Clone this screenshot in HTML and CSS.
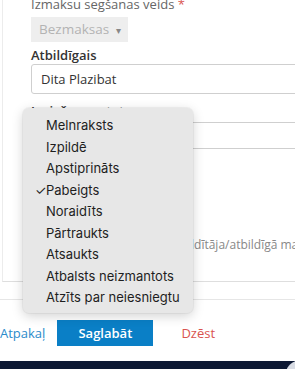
FILE: index.html
```html
<!DOCTYPE html>
<html lang="lv">
<head>
  <meta charset="UTF-8">
  <meta name="viewport" content="width=device-width, initial-scale=1.0">
  <title>Ieviešanas statuss</title>
  <link rel="stylesheet" href="styles.css">
</head>
<body>

<div class="panel">
  <div class="form">
    <label class="field-label muted">Izmaksu segšanas veids <span class="req">*</span></label>
    <div class="select-disabled">Bezmaksas <span class="caret">&#9662;</span></div>

    <label class="field-label">Atbildīgais</label>
    <div class="text-input">Dita Plazibat</div>

    <label class="field-label status-label">Ieviešanas statuss</label>
    <div class="text-input short">Pabeigts</div>

    <div class="note-block">
      <p class="note">Nosūtīt paziņojumus par izpildītāja/atbildīgā maiņu</p>
    </div>
  </div>
</div>

<div class="footer">
  <div class="actions">
    <a class="link-back" href="#">Atpakaļ</a>
    <button class="btn-save">Saglabāt</button>
    <a class="link-delete" href="#">Dzēst</a>
  </div>
</div>

<div class="bottom-strip"></div>

<!-- Status dropdown menu -->
<ul class="menu">
  <li>Melnraksts</li>
  <li>Izpildē</li>
  <li>Apstiprināts</li>
  <li class="checked">Pabeigts</li>
  <li>Noraidīts</li>
  <li>Pārtraukts</li>
  <li>Atsaukts</li>
  <li>Atbalsts neizmantots</li>
  <li>Atzīts par neiesniegtu</li>
</ul>

</body>
</html>
```

FILE: styles.css
```css
/* Global Styles */
body {
  margin: 0;
  width: 295px;
  height: 370px;
  overflow: hidden;
  background-color: #ffffff;
  font-family: 'Open Sans', 'Liberation Sans', sans-serif;
  position: relative;
}

.panel {
  margin-left: 2px;
  height: 282px;
  border-left: 1px solid #ececec;
  border-bottom: 1px solid #dedede;
  box-sizing: border-box;
  overflow: hidden;
}

.form {
  margin-top: -4px;
  padding-left: 28px;
  display: flex;
  flex-direction: column;
  align-items: flex-start;
}

.field-label {
  font-size: 13px;
  line-height: 16px;
  color: #333;
  font-weight: 600;
  margin-top: 5px;
}

.field-label.muted {
  margin-top: 0;
  font-weight: 400;
  color: #666;
}

.field-label.status-label {
  margin-top: 9px;
}

.req {
  color: #d9534f;
}

.select-disabled {
  margin-top: 5px;
  width: 97px;
  height: 25px;
  box-sizing: border-box;
  padding-left: 8px;
  background-color: #eeeeee;
  color: #b3b3b3;
  font-size: 13.5px;
  line-height: 25px;
}

.caret {
  font-size: 10px;
  color: #888;
  margin-left: 3px;
}

.text-input {
  margin-top: 1px;
  width: 290px;
  height: 30px;
  box-sizing: border-box;
  border: 1px solid #cfcfcf;
  border-radius: 3px;
  padding-left: 9px;
  font-size: 13px;
  line-height: 28px;
  color: #333;
}

.text-input.short {
  margin-top: 3px;
  height: 27px;
  line-height: 25px;
}

.note-block {
  height: 130px;
  display: flex;
  align-items: flex-end;
}

.note {
  margin: 0 0 26px 0;
  font-size: 12px;
  color: #888;
  white-space: nowrap;
}

/* Footer */
.footer {
  margin-top: 17px;
  border-top: 1px solid #e6e6e6;
  height: 62px;
  box-sizing: border-box;
}

.actions {
  display: flex;
  align-items: center;
  height: 46px;
  padding-top: 20px;
  box-sizing: border-box;
}

.link-back {
  color: #2b8bcb;
  text-decoration: none;
  font-size: 13px;
}

.btn-save {
  margin-left: 12px;
  width: 96px;
  height: 26px;
  border: none;
  background-color: #0a7fc6;
  color: #ffffff;
  font-family: 'Open Sans', 'Liberation Sans', sans-serif;
  font-weight: 600;
  font-size: 13px;
  cursor: pointer;
}

.link-delete {
  margin-left: 28px;
  color: #d9534f;
  text-decoration: none;
  font-size: 13px;
}

.bottom-strip {
  height: 8px;
  background: radial-gradient(circle at 300px 14px, #d8dce4 0, #d8dce4 14px, transparent 15px), #0c1833;
}

/* Dropdown menu */
.menu {
  position: absolute;
  left: 23px;
  top: 108px;
  width: 170px;
  height: 205px;
  box-sizing: border-box;
  margin: 0;
  padding: 7px 0 0 0;
  list-style: none;
  background-color: #e7e7e7;
  border-radius: 6px;
  box-shadow: 0 3px 12px rgba(0, 0, 0, 0.18), 0 0 0 1px rgba(0, 0, 0, 0.04);
  font-family: Inter, 'Liberation Sans', sans-serif;
  font-size: 13px;
  color: #1e1e1e;
}

.menu li {
  height: 21.5px;
  line-height: 21.5px;
  padding-left: 23px;
  position: relative;
}

.menu li.checked::before {
  content: "\2713";
  position: absolute;
  left: 12px;
  font-size: 13px;
}
```
